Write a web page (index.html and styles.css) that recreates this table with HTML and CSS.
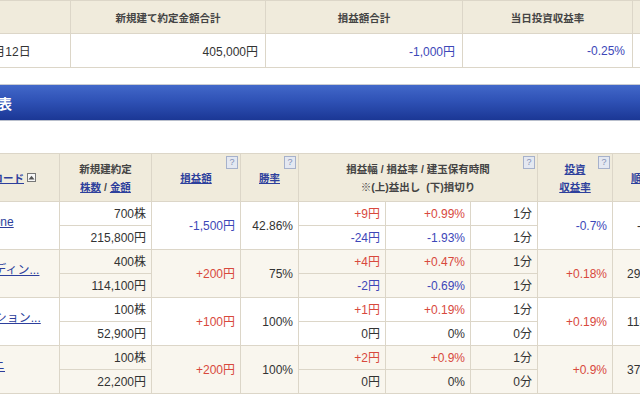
FILE: index.html
```html
<!DOCTYPE html>
<html lang="ja">
<head>
<meta charset="utf-8">
<title>損益表</title>
<link rel="stylesheet" href="styles.css">
</head>
<body>
<div class="page">
  <table class="summary">
    <colgroup><col class="s1"><col class="s2"><col class="s3"><col class="s4"><col class="s5"></colgroup>
    <tr class="sh">
      <th></th>
      <th>新規建て約定金額合計</th>
      <th>損益額合計</th>
      <th>当日投資収益率</th>
      <th></th>
    </tr>
    <tr class="sd">
      <td class="l">2024年3月12日</td>
      <td>405,000円</td>
      <td class="neg">-1,000円</td>
      <td class="neg">-0.25%</td>
      <td></td>
    </tr>
  </table>

  <div class="bar"><h2><span class="hid">銘柄別損益</span>表</h2></div>

  <table class="main">
    <colgroup>
      <col class="c-name"><col class="c-qty"><col class="c-pl"><col class="c-win">
      <col class="c-e1"><col class="c-e2"><col class="c-e3"><col class="c-f"><col class="c-g">
    </colgroup>
    <thead>
      <tr>
        <th class="name-h"><a href="#">銘柄/コード</a><span class="sort"><svg width="7" height="5" viewBox="0 0 7 5"><path d="M0.5 4.5 L3.5 0.8 L6.5 4.5 Z" fill="#555"/></svg></span></th>
        <th>新規建約定<br><a href="#">株数</a> / <a href="#">金額</a></th>
        <th class="help"><a href="#">損益額</a><span class="q">?</span></th>
        <th class="help"><a href="#">勝率</a><span class="q">?</span></th>
        <th class="help" colspan="3">損益幅 / 損益率 / 建玉保有時間<br>※(上)益出し&nbsp;&nbsp;(下)損切り<span class="q">?</span></th>
        <th class="help"><a href="#">投資<br>収益率</a><span class="q">?</span></th>
        <th class="gh"><a href="#">順位</a></th>
      </tr>
    </thead>
    <tbody>
      <tr class="up">
        <td rowspan="2" class="name n1"><a href="#">ワンキャリアPhone</a></td>
        <td>700株</td>
        <td rowspan="2" class="neg">-1,500円</td>
        <td rowspan="2">42.86%</td>
        <td class="pos">+9円</td><td class="pos">+0.99%</td><td>1分</td>
        <td rowspan="2" class="neg">-0.7%</td>
        <td rowspan="2" class="g g1">-</td>
      </tr>
      <tr class="dn">
        <td>215,800円</td>
        <td class="neg">-24円</td><td class="neg">-1.93%</td><td>1分</td>
      </tr>

      <tr class="up alt">
        <td rowspan="2" class="name"><a href="#">ギフティホールディン...</a></td>
        <td>400株</td>
        <td rowspan="2" class="pos">+200円</td>
        <td rowspan="2">75%</td>
        <td class="pos">+4円</td><td class="pos">+0.47%</td><td>1分</td>
        <td rowspan="2" class="pos">+0.18%</td>
        <td rowspan="2" class="g">29秒</td>
      </tr>
      <tr class="dn alt">
        <td>114,100円</td>
        <td class="neg">-2円</td><td class="neg">-0.69%</td><td>1分</td>
      </tr>

      <tr class="up">
        <td rowspan="2" class="name"><a href="#">ＡＩＣソリューション...</a></td>
        <td>100株</td>
        <td rowspan="2" class="pos">+100円</td>
        <td rowspan="2">100%</td>
        <td class="pos">+1円</td><td class="pos">+0.19%</td><td>1分</td>
        <td rowspan="2" class="pos">+0.19%</td>
        <td rowspan="2" class="g">11秒</td>
      </tr>
      <tr class="dn">
        <td>52,900円</td>
        <td>0円</td><td>0%</td><td>0分</td>
      </tr>

      <tr class="up alt">
        <td rowspan="2" class="name n4"><a href="#">サンバイオジーニ</a></td>
        <td>100株</td>
        <td rowspan="2" class="pos">+200円</td>
        <td rowspan="2">100%</td>
        <td class="pos">+2円</td><td class="pos">+0.9%</td><td>1分</td>
        <td rowspan="2" class="pos">+0.9%</td>
        <td rowspan="2" class="g">37秒</td>
      </tr>
      <tr class="dn alt">
        <td>22,200円</td>
        <td>0円</td><td>0%</td><td>0分</td>
      </tr>
    </tbody>
  </table>
</div>
</body>
</html>
```

FILE: styles.css
```css
html, body {
  margin: 0;
  padding: 0;
  background: #fff;
  overflow: hidden;
}
body {
  width: 640px;
  height: 396px;
  font-family: "Liberation Sans", "Noto Sans CJK JP", sans-serif;
  color: #333;
  font-size: 12px;
}
.page {
  width: 640px;
  overflow: hidden;
}
a {
  color: #2d3f9c;
  text-decoration: underline;
}

/* summary table */
.summary {
  border-collapse: collapse;
  table-layout: fixed;
  width: 752px;
  margin-left: -60px;
}
.summary .s1 { width: 130px; }
.summary .s2 { width: 195px; }
.summary .s3 { width: 197px; }
.summary .s4 { width: 170px; }
.summary .s5 { width: 60px; }
.summary th, .summary td {
  border: 1px solid #dcd6c8;
  padding: 0 7px;
}
.summary th {
  background: #f0ebdc;
  height: 32px;
  font-size: 10.5px;
  font-weight: bold;
  color: #444;
  text-align: center;
}
.summary td {
  height: 33px;
  text-align: right;
  font-size: 12px;
}
.summary td.l { text-align: left; }

.neg { color: #3d47b8; }
.pos { color: #d8493d; }

/* blue bar */
.bar {
  margin-top: 16px;
  height: 35px;
  border-top: 1px solid #c9ccd3;
  border-bottom: 1px solid #b9bfcc;
  background: linear-gradient(#4268c9, #2f52b6 45%, #1b3795);
  display: flex;
  align-items: center;
}
.bar h2 {
  margin: 0 0 0 -72px;
  font-size: 14px;
  font-weight: bold;
  color: #fff;
  font-family: "Noto Sans CJK JP", sans-serif;
}

/* main table */
.main {
  margin-top: 32px;
  margin-left: -101px;
  border-collapse: collapse;
  table-layout: fixed;
  width: 773px;
}
.c-name { width: 160px; }
.c-qty { width: 92px; }
.c-pl { width: 89px; }
.c-win { width: 58px; }
.c-e1 { width: 87px; }
.c-e2 { width: 85px; }
.c-e3 { width: 67px; }
.c-f { width: 75px; }
.c-g { width: 60px; }

.main th, .main td {
  border: 1px solid #dcd6c8;
}
.main th {
  background: #f0ebdc;
  height: 47px;
  padding: 0;
  font-size: 10.5px;
  font-weight: bold;
  color: #444;
  line-height: 18px;
  text-align: center;
  position: relative;
}
.main th.name-h {
  text-align: right;
  padding-right: 23px;
}
.main th.gh {
  text-align: left;
  padding-left: 18px;
}
.sort {
  display: inline-block;
  vertical-align: middle;
  width: 7px;
  height: 7px;
  border: 1px solid #777;
  background: #f7f7f7;
  margin-left: 3px;
  margin-top: -2px;
  line-height: 0;
}
.sort svg {
  display: block;
  margin-top: 1px;
}
.q {
  position: absolute;
  top: 2px;
  right: 2px;
  width: 10px;
  height: 11px;
  border: 1px solid #a6b1cb;
  background: #e4e8f1;
  color: #8391b4;
  font-size: 9px;
  line-height: 11px;
  font-weight: normal;
  text-align: center;
}

.main td {
  height: 23px;
  padding: 0 5px 0 4px;
  text-align: right;
  font-size: 12px;
  line-height: 14px;
  background: #fff;
}
.main tr.alt td {
  background: #f9f6ee;
}
.main td.name {
  text-align: left;
  padding: 0 0 7px 11px;
  white-space: nowrap;
  overflow: hidden;
}
.main td.n1 {
  padding-left: 7px;
}
.main td.n4 {
  padding-left: 9px;
}
.main td.g {
  text-align: left;
  padding-left: 14px;
}
.main td.g1 {
  padding-left: 24px;
}
```
